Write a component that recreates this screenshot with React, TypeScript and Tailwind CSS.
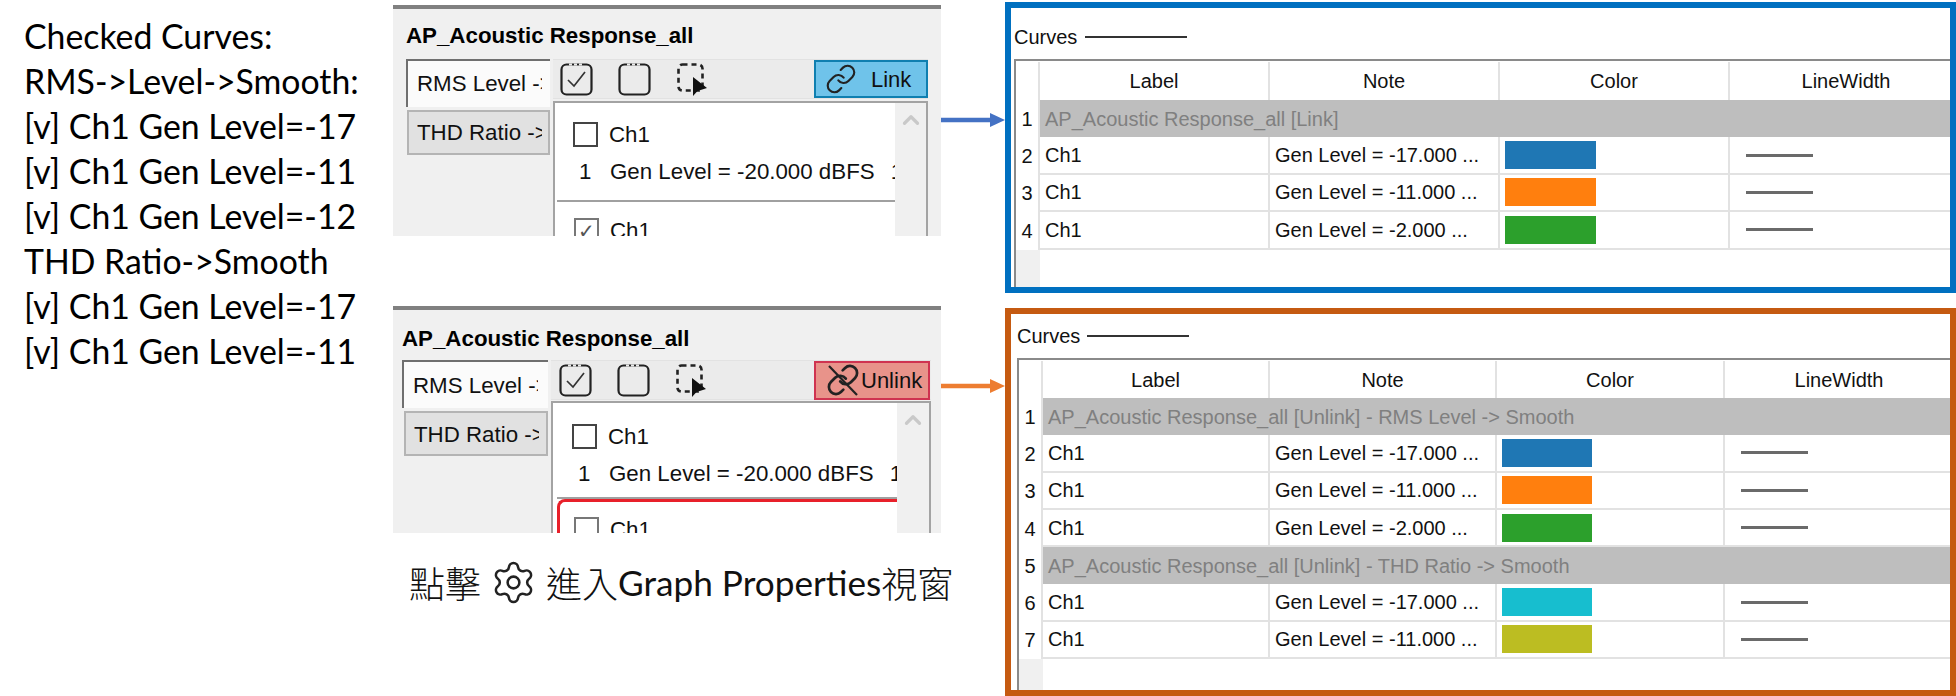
import React from "react";
import { Link, Settings, ChevronUp } from "lucide-react";

const arial = "font-['Liberation_Sans',Arial,sans-serif]";

function CheckIcon({ checked }: { checked?: boolean }) {
  return (
    <svg width="33" height="33" viewBox="0 0 33 33" fill="none" className="shrink-0">
      <rect x="1.5" y="1.5" width="30" height="30" rx="5" stroke="#222" strokeWidth="2.2" />
      <path d="M9 1.5h3M14 1.5h3M19 1.5h3" stroke="#ececec" strokeWidth="2" />
      {checked && <path d="M8 17l6 6L25 9" stroke="#333" strokeWidth="1.7" />}
    </svg>
  );
}

function PartialIcon() {
  return (
    <svg width="31" height="33" viewBox="0 0 31 33" fill="none" className="shrink-0">
      <rect x="1.5" y="1.5" width="24" height="26" rx="4" stroke="#222" strokeWidth="2.6" strokeDasharray="5 4" />
      <path d="M16 14L16 33L20.5 28L30 25Z" fill="#111" />
    </svg>
  );
}

function Toolbar({ cls, children }: { cls: string; children: React.ReactNode }) {
  return <div className={"flex items-center bg-[#ebebeb] border-t border-b border-[#e2e2e2] " + cls}>{children}</div>;
}

function Panel({
  cls, titleCls, tabsCls, tab1Cls, tab2Cls, barCls, gapA, gapB, gapC, button, listCls, innerCls, rowPad, numCls, sep, scrollCls,
}: {
  cls: string; titleCls: string; tabsCls: string; tab1Cls: string; tab2Cls: string; barCls: string;
  gapA: string; gapB: string; gapC: string; button: React.ReactNode; listCls: string; innerCls: string; rowPad: string; numCls: string;
  sep: React.ReactNode; scrollCls: string;
}) {
  return (
    <div className={"w-[548px] bg-[#f0f0f0] border-t-[4px] border-[#808080] overflow-hidden shrink-0 flex flex-col " + arial + " " + cls}>
      <div className={"h-[50px] flex items-center font-bold text-[22.3px] text-black whitespace-nowrap " + titleCls}>AP_Acoustic Response_all</div>
      <div className="flex flex-1 min-h-0">
        <div className={"flex flex-col gap-[3px] shrink-0 " + tabsCls}>
          <div className={"h-[48px] border-t-2 border-l-2 border-[#6f6f6f] bg-[#fbfbfb] pl-[9px] flex items-center text-[22.3px] text-[#111] whitespace-nowrap " + tab1Cls}>
            <span className="w-[125px] overflow-hidden">RMS Level -&gt;</span>
          </div>
          <div className={"h-[45px] border-2 border-[#b4b4b4] bg-[#e1e1e1] pl-[8px] flex items-center text-[22.3px] text-[#111] whitespace-nowrap " + tab2Cls}>
            <span className="w-[125px] overflow-hidden">THD Ratio -&gt;</span>
          </div>
        </div>
        <div className="flex flex-col flex-1 min-w-0">
          <Toolbar cls={barCls}>
            <div className={gapA}><CheckIcon checked /></div>
            <div className={gapB}><CheckIcon /></div>
            <div className={gapC}><PartialIcon /></div>
            {button}
          </Toolbar>
          <div className={"flex flex-1 border-t-2 border-l-2 border-r-2 border-[#a3a3a3] bg-white min-h-0 overflow-hidden " + listCls}>
            <div className={"flex-1 min-w-0 overflow-hidden " + innerCls}>
              <div className={"flex items-center h-[37px] " + rowPad}>
                <div className="w-[25px] h-[25px] border-2 border-[#444] shrink-0" />
                <span className="ml-[11px] text-[22.3px] text-[#111]">Ch1</span>
              </div>
              <div className={"flex items-center h-[37px] text-[22.3px] text-[#111] whitespace-nowrap " + numCls}>
                <span className="w-[31px] shrink-0">1</span>
                <span className="shrink-0">Gen Level = -20.000 dBFS</span>
                <span className="ml-[16px] shrink-0">1</span>
              </div>
              {sep}
            </div>
            <div className={"bg-[#f0f0f0] shrink-0 flex justify-center pt-[4px] " + scrollCls}>
              <ChevronUp size={26} strokeWidth={3} color="#c9c9c9" />
            </div>
          </div>
        </div>
      </div>
    </div>
  );
}

function Cell({ cls, children }: { cls?: string; children?: React.ReactNode }) {
  return <div className={"flex items-center overflow-hidden whitespace-nowrap min-w-0 " + (cls || "")}>{children}</div>;
}

type Row =
  | { group: string }
  | { note: string; color: string };

function CurvesTable({
  rows, gridCls, rowH, headH, lwHead, swatchCls, tableCls,
}: {
  rows: Row[]; gridCls: string; rowH: string; headH: string; lwHead: string; swatchCls: string; tableCls: string;
}) {
  const div = "border-r-2 border-[#e2e2e2]";
  return (
    <div className={"flex-1 min-h-0 flex flex-col border-t-2 border-l-2 border-[#8a8a8a] text-[20px] text-[#111] " + tableCls}>
      <div className={"grid " + gridCls + " " + headH}>
        <Cell cls={div} />
        <Cell cls={"justify-center " + div}>Label</Cell>
        <Cell cls={"justify-center " + div}>Note</Cell>
        <Cell cls={"justify-center " + div}>Color</Cell>
        <Cell cls={"justify-center " + lwHead}>LineWidth</Cell>
      </div>
      {rows.map((r, i) => (
        <div key={i} className={"grid " + gridCls + " " + rowH}>
          <Cell cls={"justify-center " + div}>{i + 1}</Cell>
          {"group" in r ? (
            <Cell cls="col-span-4 bg-[#bebebe] text-[#808080] pl-[5px]">{r.group}</Cell>
          ) : (
            <>
              <Cell cls={"pl-[5px] border-b-2 border-[#e2e2e2] " + div}>Ch1</Cell>
              <Cell cls={"pl-[5px] border-b-2 border-[#e2e2e2] " + div}>{r.note}</Cell>
              <Cell cls={"pl-[5px] border-b-2 border-[#e2e2e2] " + div}>
                <div className={"h-[28px] " + swatchCls} style={{ backgroundColor: r.color }} />
              </Cell>
              <Cell cls="pl-[16px] border-b-2 border-[#e2e2e2]">
                <div className="w-[67px] h-[3px] bg-[#6a6a6a]" />
              </Cell>
            </>
          )}
        </div>
      ))}
      <div className={"grid flex-1 " + gridCls}>
        <div className="bg-[#f0f0f0]" />
      </div>
    </div>
  );
}

function CurvesLabel({ cls, lineCls }: { cls: string; lineCls: string }) {
  return (
    <div className={"flex items-center text-[20px] text-[#111] " + cls}>
      <span>Curves</span>
      <span className={"w-[102px] h-[2px] bg-[#333] " + lineCls} />
    </div>
  );
}

const lines = [
  "Checked Curves:",
  "RMS->Level->Smooth:",
  "[v] Ch1 Gen Level=-17",
  "[v] Ch1 Gen Level=-11",
  "[v] Ch1 Gen Level=-12",
  "THD Ratio->Smooth",
  "[v] Ch1 Gen Level=-17",
  "[v] Ch1 Gen Level=-11",
];

export default function App() {
  return (
    <div className="w-[1956px] h-[696px] bg-white flex overflow-hidden">
      <div className="w-[393px] shrink-0 pl-[24px] pt-[14px] font-['Lato',sans-serif] text-[33.8px] leading-[45px] text-black whitespace-nowrap">
        {lines.map((l, i) => (
          <div key={i}>{l}</div>
        ))}
      </div>

      <div className="w-[548px] shrink-0 flex flex-col pt-[5px]">
        <Panel
          cls="h-[231px]"
          titleCls="pl-[13px] pt-[4px]"
          tabsCls="w-[157px] pl-[13px]"
          tab1Cls=""
          tab2Cls="ml-[1px]"
          barCls="ml-[3px] w-[375px] h-[40px] pl-[7px]"
          gapA="mr-[25px]"
          gapB="mr-[26px]"
          gapC="mr-[106px]"
          button={
            <div className="h-[38px] w-[114px] shrink-0 bg-[#6fc3ea] border-2 border-[#0f7fb0] flex items-center pl-[9px] gap-[14px] text-[22px] text-[#111]">
              <Link size={32} strokeWidth={1.6} color="#222" className="shrink-0" />
              <span>Link</span>
            </div>
          }
          listCls="ml-[3px] mt-[2px] w-[375px]"
          innerCls="pt-[13px]"
          rowPad="pl-[18px]"
          numCls="pl-[24px]"
          sep={
            <div className="ml-[2px] mt-[10px]">
              <div className="h-[2px] bg-[#a0a0a0]" />
              <div className="flex items-center h-[25px] mt-[16px] pl-[17px]">
                <div className="w-[25px] h-[25px] border-2 border-[#777] shrink-0 flex items-center justify-center text-[#555] text-[20px]">✓</div>
                <span className="ml-[11px] text-[22.3px] text-[#111]">Ch1</span>
              </div>
            </div>
          }
          scrollCls="w-[31px]"
        />
        <div className="mt-[70px]">
          <Panel
            cls="h-[227px]"
            titleCls="pl-[9px] pt-[8px]"
            tabsCls="w-[155px] pl-[9px]"
            tab1Cls="pt-[2px]"
            tab2Cls="ml-[2px] pt-[2px]"
            barCls="ml-[3px] w-[380px] h-[40px] pl-[8px]"
            gapA="mr-[25px]"
            gapB="mr-[26px]"
            gapC="mr-[107px]"
            button={
              <div className="h-[39px] w-[116px] shrink-0 bg-[#e8938a] border-2 border-[#cf3350] flex items-center pl-[10px] gap-[1px] text-[22px] text-[#111]">
                <span className="relative w-[34px] h-[34px] shrink-0">
                  <Link size={34} strokeWidth={1.9} color="#222" />
                  <svg width="34" height="34" viewBox="0 0 34 34" className="absolute top-0 left-0">
                    <path d="M3 3L31 32" stroke="#222" strokeWidth="2.2" />
                  </svg>
                </span>
                <span>Unlink</span>
              </div>
            }
            listCls="ml-[3px] mt-[1px] w-[380px]"
            innerCls="pt-[15px]"
            rowPad="pl-[19px]"
            numCls="pl-[25px]"
            sep={
              <div className="ml-[4px] mt-[5px]">
                <div className="h-[2px] bg-[#a0a0a0]" />
                <div className="h-[40px] border-t-[3px] border-l-[3px] border-[#e8202a] rounded-tl-[8px] pl-[14px] pt-[15px] flex items-start">
                  <div className="w-[25px] h-[25px] border-2 border-[#777] shrink-0" />
                  <span className="ml-[11px] text-[22.3px] text-[#111] leading-[25px]">Ch1</span>
                </div>
              </div>
            }
            scrollCls="w-[32px]"
          />
        </div>
        <div className="mt-[26px] h-[46px] pl-[16px] flex items-center font-['Lato','Noto_Sans_CJK_TC',sans-serif] text-[36px] text-[#111] whitespace-nowrap">
          <span className="font-['Noto_Sans_CJK_TC',sans-serif] font-light">點擊</span>
          <Settings size={47} strokeWidth={1.3} color="#222" className="ml-[9px] mr-[9px] shrink-0" />
          <span className="font-['Noto_Sans_CJK_TC',sans-serif] font-light">進入</span>
          <span className="text-[35.2px]">Graph Properties</span>
          <span className="font-['Noto_Sans_CJK_TC',sans-serif] font-light">視窗</span>
        </div>
      </div>

      <div className="w-[64px] shrink-0 flex flex-col pt-[113px]">
        <svg width="64" height="14" viewBox="0 0 64 14">
          <path d="M0 7H50" stroke="#4472c4" strokeWidth="4.5" />
          <path d="M49 0L64 7L49 14Z" fill="#4472c4" />
        </svg>
        <svg width="64" height="14" viewBox="0 0 64 14" className="mt-[252px]">
          <path d="M0 7H50" stroke="#ed7d31" strokeWidth="4.5" />
          <path d="M49 0L64 7L49 14Z" fill="#ed7d31" />
        </svg>
      </div>

      <div className={"w-[951px] shrink-0 flex flex-col pt-[2px] " + arial}>
        <div className="h-[291px] border-[6px] border-[#0070c0] bg-white flex flex-col">
          <CurvesLabel cls="h-[51px] pt-[7px] pl-[3px]" lineCls="ml-[8px]" />
          <CurvesTable
            tableCls="ml-[3px]"
            gridCls="grid-cols-[24px_230px_230px_230px_220px]"
            headH="h-[39px] pt-[1px]"
            rowH="h-[37.4px]"
            lwHead="pl-[12px]"
            swatchCls="w-[91px]"
            rows={[
              { group: "AP_Acoustic Response_all [Link]" },
              { note: "Gen Level = -17.000 ...", color: "#1f77b4" },
              { note: "Gen Level = -11.000 ...", color: "#ff7f0e" },
              { note: "Gen Level = -2.000 ...", color: "#2ca02c" },
            ]}
          />
        </div>
        <div className="h-[388px] mt-[15px] border-[6px] border-[#c55a11] bg-white flex flex-col">
          <CurvesLabel cls="h-[44px] pl-[6px]" lineCls="ml-[7px]" />
          <CurvesTable
            tableCls="ml-[6px]"
            gridCls="grid-cols-[24px_227px_227px_228px_225px]"
            headH="h-[38px] pt-[1px]"
            rowH="h-[37.3px]"
            lwHead="pl-[3px]"
            swatchCls="w-[90px]"
            rows={[
              { group: "AP_Acoustic Response_all [Unlink] - RMS Level -> Smooth" },
              { note: "Gen Level = -17.000 ...", color: "#1f77b4" },
              { note: "Gen Level = -11.000 ...", color: "#ff7f0e" },
              { note: "Gen Level = -2.000 ...", color: "#2ca02c" },
              { group: "AP_Acoustic Response_all [Unlink] - THD Ratio -> Smooth" },
              { note: "Gen Level = -17.000 ...", color: "#17becf" },
              { note: "Gen Level = -11.000 ...", color: "#bcbd22" },
            ]}
          />
        </div>
      </div>
    </div>
  );
}
